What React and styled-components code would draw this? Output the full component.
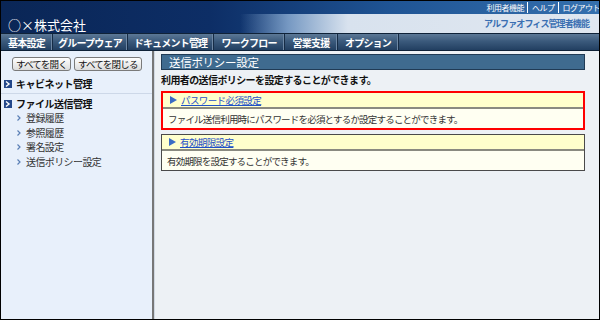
import React from 'react'
import styled, { createGlobalStyle } from 'styled-components'

const GlobalStyle = createGlobalStyle`
  html, body {
    margin: 0;
    padding: 0;
    background: #ffffff;
  }
  body {
    font-family: "Noto Sans CJK JP", "Liberation Sans", sans-serif;
  }
`

const menus = [
  { label: '基本設定', width: 52 },
  { label: 'グループウェア', width: 75 },
  { label: 'ドキュメント管理', width: 86 },
  { label: 'ワークフロー', width: 71 },
  { label: '営業支援', width: 53 },
  { label: 'オプション', width: 61 },
]
const subItems = ['登録履歴', '参照履歴', '署名設定', '送信ポリシー設定']

const sections = [
  {
    title: 'パスワード必須設定',
    text: 'ファイル送信利用時にパスワードを必須とするか設定することができます。',
    highlight: true,
  },
  {
    title: '有効期限設定',
    text: '有効期限を設定することができます。',
  },
]

function BoxIcon() {
  return (
    <svg width="8" height="8" viewBox="0 0 8 8">
      <rect x="0" y="0" width="8" height="8" fill="#24488a" />
      <path d="M2 1.5 L5 4 L2 6.5" stroke="#fff" strokeWidth="1.4" fill="none" />
    </svg>
  )
}

function Chevron() {
  return (
    <svg width="4" height="6" viewBox="0 0 4 6">
      <path d="M0.5 0.5 L3 3 L0.5 5.5" stroke="#5a7fb5" strokeWidth="1.2" fill="none" />
    </svg>
  )
}

function Triangle() {
  return (
    <svg width="7" height="8" viewBox="0 0 7 8">
      <path d="M0 0 L7 4 L0 8 Z" fill="#3a6cc4" />
    </svg>
  )
}

function Section({ title, text, highlight }) {
  return (
    <Box highlight={highlight}>
      <BoxHead>
        <Triangle />
        <BoxLink href="#">{title}</BoxLink>
      </BoxHead>
      <BoxBody>{text}</BoxBody>
    </Box>
  )
}

export default function App() {
  return (
    <Frame>
      <GlobalStyle />
      <Header>
        <TopRow>
          <TopLinks>
            <TopLink>利用者機能</TopLink>
            <TopLink>ヘルプ</TopLink>
            <TopLink last>ログアウト</TopLink>
          </TopLinks>
        </TopRow>
        <SubRow>
          <Logo>○×株式会社</Logo>
          <SystemName>アルファオフィス管理者機能</SystemName>
        </SubRow>
      </Header>
      <Nav>
        {menus.map((m) => (
          <NavItem key={m.label} width={m.width}>{m.label}</NavItem>
        ))}
      </Nav>
      <Body>
        <Sidebar>
          <ButtonRow>
            <SmallButton>すべてを開く</SmallButton>
            <SmallButton>すべてを閉じる</SmallButton>
          </ButtonRow>
          <Group divider>
            <GroupTitle>
              <BoxIcon />
              キャビネット管理
            </GroupTitle>
          </Group>
          <Group>
            <GroupTitle>
              <BoxIcon />
              ファイル送信管理
            </GroupTitle>
            {subItems.map((s) => (
              <SubItem key={s}>
                <Chevron />
                {s}
              </SubItem>
            ))}
          </Group>
        </Sidebar>
        <Main>
          <PageTitle>送信ポリシー設定</PageTitle>
          <Lead>利用者の送信ポリシーを設定することができます。</Lead>
          {sections.map((s) => (
            <Section key={s.title} {...s} />
          ))}
        </Main>
      </Body>
    </Frame>
  )
}

const Frame = styled.div`
  width: 600px;
  height: 320px;
  box-sizing: border-box;
  border: 1px solid #000;
  display: flex;
  flex-direction: column;
  overflow: hidden;
  background: #edf1f5;
`

const Header = styled.div`
  height: 32px;
  display: flex;
  flex-direction: column;
  background: linear-gradient(to right, #0a2656 0%, #0d2e66 35%, #1f5494 65%, #3570ae 100%);
`

const TopRow = styled.div`
  height: 15px;
  display: flex;
  justify-content: flex-end;
  align-items: center;
`

const TopLinks = styled.div`
  display: flex;
  align-items: center;
  margin-right: -4px;
`

const TopLink = styled.span`
  color: #ffffff;
  font-size: 8px;
  letter-spacing: -0.5px;
  line-height: 11px;
  padding: 0 3px 0 4px;
  border-right: ${(p) => (p.last ? 'none' : '1px solid #ffffff')};
`

const SubRow = styled.div`
  flex: 1;
  display: flex;
  align-items: center;
  justify-content: space-between;
  padding: 0 10px 0 7px;
  background: linear-gradient(to right, rgba(223, 231, 240, 0) 0%, rgba(223, 231, 240, 0) 40%, rgba(150, 182, 218, 0.75) 48%, #d8e2ee 58%, #e0e7f0 100%);
`

const Logo = styled.div`
  color: #ffffff;
  font-size: 13px;
  line-height: 16px;
  margin-top: 3px;
`

const SystemName = styled.div`
  color: #3a6fb2;
  font-size: 9px;
  font-weight: bold;
  letter-spacing: -0.9px;
`

const Nav = styled.div`
  height: 16px;
  display: flex;
  align-items: stretch;
  background: linear-gradient(to bottom, #5c7896 0%, #3b5a7c 45%, #223f61 100%);
  border-bottom: 1px solid #0f2238;
  border-top: 1px solid #0f2238;
`

const NavItem = styled.div`
  width: ${(p) => p.width}px;
  box-sizing: border-box;
  display: flex;
  align-items: center;
  justify-content: center;
  color: #ffffff;
  font-size: 10px;
  font-weight: bold;
  letter-spacing: -0.8px;
  border-right: 1px solid #162c46;
  box-shadow: inset -1px 0 0 #6d87a4;
`

const Body = styled.div`
  flex: 1;
  display: flex;
  min-height: 0;
`

const Sidebar = styled.div`
  width: 151px;
  background: #e8f0fb;
  border-right: 2px solid #777777;
  box-shadow: 1px 0 0 #d0d8e2;
  display: flex;
  flex-direction: column;
`

const ButtonRow = styled.div`
  display: flex;
  gap: 3px;
  padding: 6px 0 0 11px;
`

const SmallButton = styled.button`
  height: 14px;
  padding: 0 3px;
  font-family: inherit;
  font-size: 9.5px;
  letter-spacing: -0.8px;
  line-height: 12px;
  color: #111;
  background: linear-gradient(to bottom, #ffffff, #dcdcdc);
  border: 1px solid #7a7a7a;
  border-radius: 3px;
  cursor: pointer;
`

const Group = styled.div`
  display: flex;
  flex-direction: column;
  padding: ${(p) => (p.divider ? '6px 0 2px' : '3px 0 0')};
  border-bottom: ${(p) => (p.divider ? '1px solid #cdd8e8' : 'none')};
`

const GroupTitle = styled.div`
  display: flex;
  align-items: center;
  gap: 4px;
  padding-left: 3px;
  font-size: 10px;
  font-weight: bold;
  letter-spacing: -0.5px;
  line-height: 14px;
  color: #111;
`

const SubItem = styled.div`
  display: flex;
  align-items: center;
  gap: 5px;
  padding-left: 16px;
  font-size: 10px;
  letter-spacing: -0.6px;
  line-height: 14.5px;
  color: #333;
`

const Main = styled.div`
  flex: 1;
  padding: 3px 14px 0 7px;
  display: flex;
  flex-direction: column;
`

const PageTitle = styled.div`
  height: 14px;
  padding-left: 7px;
  background: #3f6b8f;
  border: 1px solid #203b55;
  color: #ffffff;
  font-size: 11.5px;
  line-height: 14px;
  letter-spacing: -0.3px;
`

const Lead = styled.div`
  margin: 4px 0 5px;
  font-size: 10px;
  font-weight: bold;
  letter-spacing: -0.6px;
  line-height: 12px;
  color: #111;
`

const Box = styled.div`
  border: ${(p) => (p.highlight ? '2px solid #ff0000' : '1px solid #4a4a4a')};
  margin: ${(p) => (p.highlight ? '0 0 4px' : '0 0 0')};
  display: flex;
  flex-direction: column;
`

const BoxHead = styled.div`
  height: 14px;
  display: flex;
  align-items: center;
  gap: 4px;
  padding-left: 7px;
  background: #ffffcc;
  border-bottom: 2px solid #8a8a80;
`

const BoxLink = styled.a`
  color: #1e50c8;
  font-size: 9.5px;
  letter-spacing: -0.6px;
  text-decoration: underline;
`

const BoxBody = styled.div`
  height: 19px;
  display: flex;
  align-items: center;
  padding-left: 5px;
  background: #fffff2;
  color: #333;
  font-size: 9.5px;
  letter-spacing: -0.8px;
`
